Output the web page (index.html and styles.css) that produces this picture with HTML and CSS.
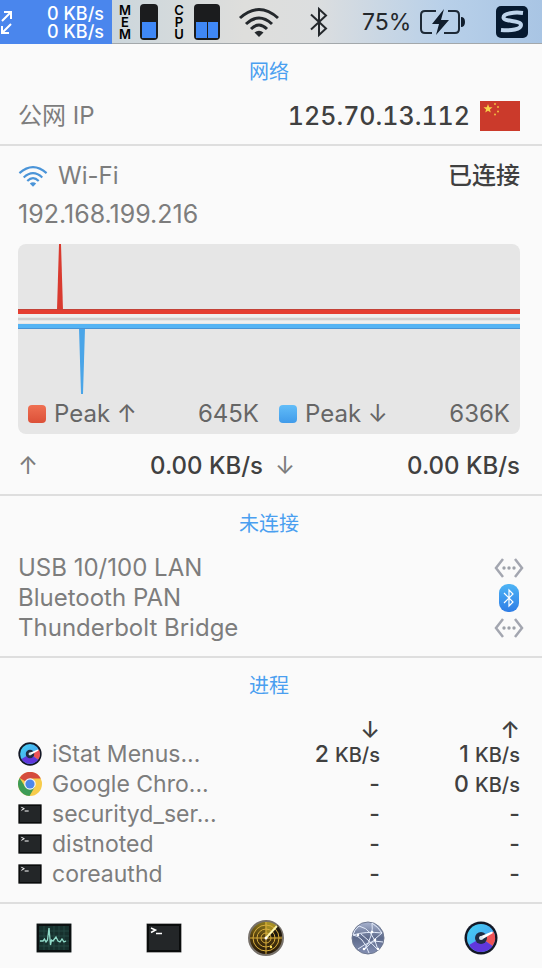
FILE: index.html
```html
<!DOCTYPE html>
<html lang="zh-CN">
<head>
  <meta charset="UTF-8" />
  <meta name="viewport" content="width=device-width, initial-scale=1.0"/>
  <title>网络</title>
  <link rel="stylesheet" href="styles.css">
</head>
<body>
  <!-- shared icons -->
  <svg class="defs" aria-hidden="true">
    <defs>
      <linearGradient id="blueFill" x1="0" y1="0" x2="0" y2="1">
        <stop offset="0" stop-color="#4db4f5"/><stop offset="1" stop-color="#2f7de6"/>
      </linearGradient>
      <linearGradient id="dialTop" x1="0" y1="0" x2="1" y2="1">
        <stop offset="0" stop-color="#45d3f5"/><stop offset="1" stop-color="#4a90ee"/>
      </linearGradient>
      <linearGradient id="radarFill" x1="0" y1="0" x2="0" y2="1">
        <stop offset="0" stop-color="#8f7c1d"/><stop offset="0.5" stop-color="#4b370e"/><stop offset="1" stop-color="#231708"/>
      </linearGradient>
      <linearGradient id="globeFill" x1="0" y1="0" x2="0" y2="1">
        <stop offset="0" stop-color="#a9b4d0"/><stop offset="0.5" stop-color="#5d6a8b"/><stop offset="1" stop-color="#8490b4"/>
      </linearGradient>
    </defs>
    <symbol id="wifi" viewBox="0 0 42 30">
      <g fill="none" stroke="currentColor" stroke-width="3">
        <path d="M2 11 Q21 -6 40 11"/>
        <path d="M8 17 Q21 5 34 17"/>
        <path d="M13 22 Q21 14 29 22"/>
      </g>
      <path d="M16.500 25.500 Q21 22 25.500 25.500 L21 30 Z" fill="currentColor"/>
    </symbol>
    <symbol id="bluetooth" viewBox="0 0 20 32">
      <path d="M2 8.500 L17 22.500 L10 29 V3 L17 9.500 L2 23.500" fill="none" stroke="currentColor" stroke-width="2"/>
    </symbol>
    <symbol id="ethernet" viewBox="0 0 30 20">
      <path d="M9 1 L2 10 L9 19 M21 1 L28 10 L21 19" fill="none" stroke="#a3a6b0" stroke-width="2.500"/>
      <g fill="#9da1a9"><circle cx="10" cy="10" r="1.700"/><circle cx="15" cy="10" r="1.700"/><circle cx="20" cy="10" r="1.700"/></g>
    </symbol>
    <symbol id="terminal" viewBox="0 0 36 30">
      <rect x="0.500" y="0.500" width="35" height="29" rx="1" fill="#24272a" stroke="#a9a9a9"/>
      <rect x="2" y="2" width="32" height="26" fill="#232628" stroke="#0a0c0c" stroke-width="2"/>
      <path d="M5 5 L9.500 7 L5 9.500 M10 10.500 H16" fill="none" stroke="#fff" stroke-width="1.500"/>
    </symbol>
    <symbol id="dial" viewBox="0 0 34 34">
      <circle cx="17" cy="17" r="16.500" fill="#131826"/>
      <circle cx="17" cy="17" r="14" fill="url(#dialTop)"/>
      <path d="M17 17 L29.500 10.500 A14 14 0 0 1 28.500 25 Z" fill="#ee5256"/>
      <path d="M17 17 L28.500 25 A14 14 0 0 1 5 24 Z" fill="#6037dc"/>
      <circle cx="17" cy="17" r="6" fill="#202c43"/>
      <path d="M16 15.500 L28 10.500 L29 12 L18 18.500 Z" fill="#fff"/>
      <circle cx="17" cy="17" r="2" fill="#d8e6ef"/>
    </symbol>
  </svg>

  <header class="menubar">
    <div class="net-status">
      <svg width="14" height="24" viewBox="0 0 14 24" fill="none" stroke="#fff" stroke-width="2" aria-hidden="true">
        <path d="M2 10 L11 1 M4 1 H11 V8 M11 13 L2 22 M2 15 V22 H9"/>
      </svg>
      <div class="net-rates"><span>0 KB/s</span><span>0 KB/s</span></div>
    </div>
    <div class="meter-label"><span>M</span><span>E</span><span>M</span></div>
    <div class="meter"><i class="core"></i></div>
    <div class="meter-label cpu"><span>C</span><span>P</span><span>U</span></div>
    <div class="meter wide"><i class="core"></i><i class="core"></i></div>
    <svg class="menu-wifi" width="42" height="30"><use href="#wifi"/></svg>
    <svg class="menu-bt" width="20" height="32"><use href="#bluetooth"/></svg>
    <span class="percent">75%</span>
    <svg width="48" height="26" viewBox="0 0 48 26" aria-hidden="true">
      <path d="M17 2 H6 Q2 2 2 6 V20 Q2 24 6 24 H13 M29 2 H36 Q40 2 40 6 V20 Q40 24 36 24 H25" fill="none" stroke="#1d2936" stroke-width="2"/>
      <path d="M42 8 Q46 8 46 13 Q46 18 42 18 Z M25 0 L13 15 H20 L17 26 L30 11 H22 Z" fill="#101d2c"/>
    </svg>
    <svg class="menu-s" width="32" height="32" viewBox="0 0 32 32" aria-hidden="true">
      <rect width="32" height="32" rx="5" fill="#071a30"/>
      <path d="M27 7 C19 6 7.500 7 7.500 11.500 C7.500 16 25 14 25 19 C25 23.500 15 25 5 24" fill="none" stroke="#bed4eb" stroke-width="4"/>
    </svg>
  </header>

  <main>
    <section class="panel">
      <h2>网络</h2>
      <div class="row public-ip">
        <span>公网 IP</span>
        <span class="value ip">125.70.13.112</span>
        <svg width="40" height="30" viewBox="0 0 40 30" role="img" aria-label="CN">
          <rect width="40" height="30" fill="#cb3a2b"/>
          <path d="M8 3 L9.200 6.200 L12.500 6.300 L9.900 8.400 L10.800 11.600 L8 9.700 L5.200 11.600 L6.100 8.400 L3.500 6.300 L6.800 6.200 Z" fill="#f7d248"/>
          <g fill="#f0bd40"><circle cx="15" cy="3" r="1"/><circle cx="18" cy="6" r="1"/><circle cx="18" cy="10.500" r="1"/><circle cx="15" cy="13.500" r="1"/></g>
        </svg>
      </div>
    </section>

    <section class="panel interface">
      <div class="row">
        <svg class="wifi-icon" width="30" height="22"><use href="#wifi"/></svg>
        <span>Wi-Fi</span>
        <span class="value">已连接</span>
      </div>
      <p class="local-ip">192.168.199.216</p>
      <div class="graph">
        <svg class="plot" viewBox="0 0 502 150" preserveAspectRatio="none" aria-hidden="true">
          <path d="M0 70 H502 V73 H0 Z M0 77 H502 V79 H0 Z" fill="#efefef"/>
          <path d="M0 74 H502 V76 H0 Z" fill="#cfcfcf"/>
          <path d="M39 66 L41 0 H43 L45 66 Z" fill="#d93a2f"/>
          <path d="M0 65 H502 V70 H0 Z" fill="#e53e31"/>
          <path d="M0 65 H502 V66 H0 Z" fill="#c44238"/>
          <path d="M61 84 L63 150 H65 L67 84 Z" fill="#4aa5e8"/>
          <path d="M0 80 H502 V85 H0 Z" fill="#55b4f4"/>
          <path d="M0 84 H502 V85 H0 Z" fill="#4a94d6"/>
        </svg>
        <div class="legend">
          <div class="peak"><i class="swatch up"></i><span>Peak ↑</span><span class="amount">645K</span></div>
          <div class="peak"><i class="swatch down"></i><span>Peak ↓</span><span class="amount">636K</span></div>
        </div>
      </div>
      <div class="speeds">
        <div class="row"><span>↑</span><span class="value">0.00 KB/s</span></div>
        <div class="row"><span>↓</span><span class="value">0.00 KB/s</span></div>
      </div>
    </section>

    <section class="panel">
      <h2>未连接</h2>
      <ul class="offline">
        <li>USB 10/100 LAN <svg width="30" height="20"><use href="#ethernet"/></svg></li>
        <li>Bluetooth PAN
          <svg class="bt-badge" width="20" height="28" viewBox="0 0 20 28">
            <rect width="20" height="28" rx="9" fill="url(#blueFill)"/>
            <path d="M5 9 L14 18 L10 22 V6 L14 10 L5 19" fill="none" stroke="#fff" stroke-width="1.200"/>
          </svg>
        </li>
        <li>Thunderbolt Bridge <svg width="30" height="20"><use href="#ethernet"/></svg></li>
      </ul>
    </section>

    <section class="panel">
      <h2>进程</h2>
      <table class="processes">
        <thead>
          <tr><th></th><th class="rate">↓</th><th class="rate">↑</th></tr>
        </thead>
        <tbody>
          <tr>
            <td><div class="app"><svg width="24" height="24"><use href="#dial"/></svg>iStat Menus...</div></td>
            <td class="rate">2 <small>KB/s</small></td><td class="rate">1 <small>KB/s</small></td>
          </tr>
          <tr>
            <td><div class="app">
              <svg width="24" height="24" viewBox="0 0 24 24">
                <circle cx="12" cy="12" r="12" fill="#f7cc4b"/>
                <path d="M12 12 L1.600 6 A12 12 0 0 1 22.800 6.500 H12 Z" fill="#d54b3d"/>
                <path d="M1.600 6 A12 12 0 0 0 11.500 24 L17 14.500 L7 14.500 Z" fill="#3d9c57"/>
                <circle cx="12" cy="12" r="5.800" fill="#f2f4f7"/><circle cx="12" cy="12" r="4.600" fill="#4c87ea"/>
              </svg>Google Chro...</div></td>
            <td class="rate">-</td><td class="rate">0 <small>KB/s</small></td>
          </tr>
          <tr>
            <td><div class="app"><svg width="24" height="20"><use href="#terminal"/></svg>securityd_ser...</div></td>
            <td class="rate">-</td><td class="rate">-</td>
          </tr>
          <tr>
            <td><div class="app"><svg width="24" height="20"><use href="#terminal"/></svg>distnoted</div></td>
            <td class="rate">-</td><td class="rate">-</td>
          </tr>
          <tr>
            <td><div class="app"><svg width="24" height="20"><use href="#terminal"/></svg>coreauthd</div></td>
            <td class="rate">-</td><td class="rate">-</td>
          </tr>
        </tbody>
      </table>
    </section>
  </main>

  <footer class="toolbar">
    <button type="button" aria-label="Activity Monitor">
      <svg width="36" height="30" viewBox="0 0 36 30">
        <rect x="0.500" y="0.500" width="35" height="29" rx="1" fill="#0b1011" stroke="#8e9292"/>
        <rect x="3" y="3" width="30" height="24" fill="#16302d"/>
        <path d="M8 3 V27 M13 3 V27 M18 3 V27 M23 3 V27 M28 3 V27 M3 8 H33 M3 13 H33 M3 18 H33 M3 23 H33" stroke="#28514b" stroke-width="0.700"/>
        <path d="M4 18 H7 L8.500 16 L10 19 L11.500 17 L13 5 L14.500 22 L15.500 17 L17 18 L20 14 L22 18 L24 19 L26 16 L28 19 L30 18" fill="none" stroke="#91dcca" stroke-width="1.300"/>
      </svg>
    </button>
    <button type="button" aria-label="Terminal"><svg width="36" height="30"><use href="#terminal"/></svg></button>
    <button type="button" aria-label="Network Utility">
      <svg width="36" height="36" viewBox="0 0 36 36">
        <circle cx="18" cy="18" r="17" fill="url(#radarFill)" stroke="#77716a" stroke-width="2"/>
        <path d="M18 18 L29 5 A17 17 0 0 1 34 16 Z" fill="#1f180c"/>
        <path d="M18 18 L17 2 A16 16 0 0 1 29 6 Z" fill="#c0a62c" opacity="0.600"/>
        <g fill="none" stroke="#d8ae3d" stroke-width="1"><circle cx="18" cy="18" r="5"/><circle cx="18" cy="18" r="9"/><circle cx="18" cy="18" r="13"/><path d="M18 2 V34 M2 18 H34"/></g>
        <path d="M18 18 L29 6" stroke="#fff6b0" stroke-width="2"/>
        <circle cx="18" cy="18" r="1.500" fill="#fff"/><circle cx="23" cy="27" r="1.200" fill="#ffe45e"/>
      </svg>
    </button>
    <button type="button" aria-label="Network">
      <svg width="34" height="34" viewBox="0 0 34 34">
        <circle cx="17" cy="17" r="16" fill="url(#globeFill)" stroke="#6e7890"/>
        <g fill="none" stroke="#e3ebfa" stroke-width="1">
          <path d="M2 14 Q15 10 31 12 M2 14 Q12 15 18 32 M8 5 Q22 8 27 29 M21 2 Q23 14 13 29 M31 12 Q23 18 13 29 M7 28 Q20 18 32 21 M10 13 Q20 21 27 29 M21 2 Q27 6 31 12 M8 5 Q3 9 2 14"/>
        </g>
        <g fill="#fff"><circle cx="21" cy="11" r="1.300"/><circle cx="24" cy="19" r="1.300"/><circle cx="13" cy="28" r="1.300"/><circle cx="7" cy="14" r="1.200"/><circle cx="27" cy="28" r="1.200"/></g>
      </svg>
    </button>
    <button type="button" aria-label="iStat Menus"><svg width="34" height="34"><use href="#dial"/></svg></button>
  </footer>
</body>
</html>
```
FILE: styles.css
```css
:root {
  --background: #fafafa;
  --text: #7d7d7d;
  --strong: #404040;
  --accent: #4a9ff0;
  --divider: #dedede;
}

* {
  box-sizing: border-box;
}

body {
  margin: 0;
  background-color: var(--background);
  color: var(--text);
  font-family: Inter, "Noto Sans CJK SC", sans-serif;
  font-size: 24px;
  line-height: 30px;
}

svg {
  display: block;
  flex-shrink: 0;
}

.defs {
  position: absolute;
  width: 0;
  height: 0;
}

/* menu bar */
.menubar {
  display: flex;
  align-items: center;
  height: 44px;
  padding-right: 14px;
  background: linear-gradient(90deg, #cbd6dc 20%, #dededc 45%, #dcdedf 58%, #b8d0e9 82%, #a9c5e4);
  border-bottom: 1px solid #a3a8ab;
  color: #24282c;
}

.net-status {
  display: flex;
  align-items: center;
  justify-content: space-between;
  width: 112px;
  height: 44px;
  padding: 2px 8px 0 0;
  background-color: #4a86ed;
  color: #fff;
}

.net-rates {
  display: flex;
  flex-direction: column;
  font-size: 18px;
  font-weight: 500;
  line-height: 18px;
  text-align: right;
}

.meter-label {
  display: flex;
  flex-direction: column;
  align-items: center;
  width: 12px;
  margin: 0 9px 0 7px;
  color: #000;
  font-size: 13px;
  font-weight: 600;
  line-height: 12px;
}

.meter-label.cpu {
  margin-left: 15px;
}

.meter {
  display: flex;
  align-items: flex-end;
  gap: 1px;
  width: 18px;
  height: 36px;
  padding: 2px;
  border-radius: 4px;
  background-color: #1b1c1e;
}

.meter.wide {
  width: 26px;
}

.core {
  flex: 1;
  height: 50%;
  background-color: #3f88f7;
}

.menu-wifi {
  margin-left: 18px;
}

.menu-bt {
  margin-left: 29px;
}

.percent {
  margin: 0 8px 0 33px;
  font-size: 23px;
}

.menu-s {
  margin-left: auto;
}

/* panels */
.panel {
  padding: 13px 22px 13px 18px;
  border-bottom: 2px solid var(--divider);
}

h2 {
  margin: 0 0 14px;
  color: var(--accent);
  font-size: 20px;
  font-weight: 400;
  line-height: 30px;
  text-align: center;
}

.row {
  display: flex;
  align-items: center;
  height: 30px;
}

.value {
  margin-left: auto;
  color: var(--strong);
  font-weight: 500;
}

.ip {
  font-size: 25px;
  font-variant-numeric: tabular-nums;
}

.public-ip svg {
  margin-left: 10px;
}

.interface {
  padding-top: 15px;
}

.wifi-icon {
  margin-right: 10px;
  color: #4a94d8;
}

.local-ip {
  margin: 8px 0 15px;
  font-size: 25px;
}

.graph {
  overflow: hidden;
  border-radius: 8px;
  background-color: #e6e6e6;
}

.plot {
  width: 100%;
  height: 150px;
}

.legend {
  display: grid;
  grid-template-columns: 1fr 1fr;
  gap: 20px;
  padding: 5px 10px;
  color: #666;
}

.peak {
  display: flex;
  align-items: center;
}

.swatch {
  width: 18px;
  height: 18px;
  margin-right: 8px;
  border-radius: 4px;
}

.swatch.up {
  background: linear-gradient(#ef7053, #dc5038);
}

.swatch.down {
  background: linear-gradient(#62bdf8, #409bea);
}

.amount {
  margin-left: auto;
}

.speeds {
  display: grid;
  grid-template-columns: 1fr 1fr;
  gap: 12px;
  margin-top: 17px;
}

.offline {
  margin: 0;
  padding: 0;
  list-style: none;
}

.offline li {
  display: flex;
  align-items: center;
  justify-content: space-between;
  height: 30px;
  margin-right: -4px;
}

.bt-badge {
  margin-right: 5px;
}

/* processes */
.processes {
  width: 100%;
  table-layout: fixed;
  border-collapse: collapse;
  font-size: 23px;
}

.processes th,
.processes td {
  height: 30px;
  padding: 0;
  font-weight: 400;
}

.processes th {
  height: 24px;
  padding-top: 6px;
  line-height: 18px;
}

.processes .rate {
  width: 140px;
  color: var(--strong);
  font-weight: 500;
  text-align: right;
}

.rate small {
  font-size: 20px;
  line-height: 20px;
}

.app {
  display: flex;
  align-items: center;
  gap: 10px;
}

/* bottom launcher */
.toolbar {
  display: grid;
  grid-template-columns: 54fr 57fr 45fr 57fr 57fr;
  align-items: center;
  justify-items: center;
  height: 64px;
  padding: 4px 4px 0 0;
}

.toolbar button {
  padding: 0;
  border: 0;
  background: none;
  cursor: pointer;
}
```
